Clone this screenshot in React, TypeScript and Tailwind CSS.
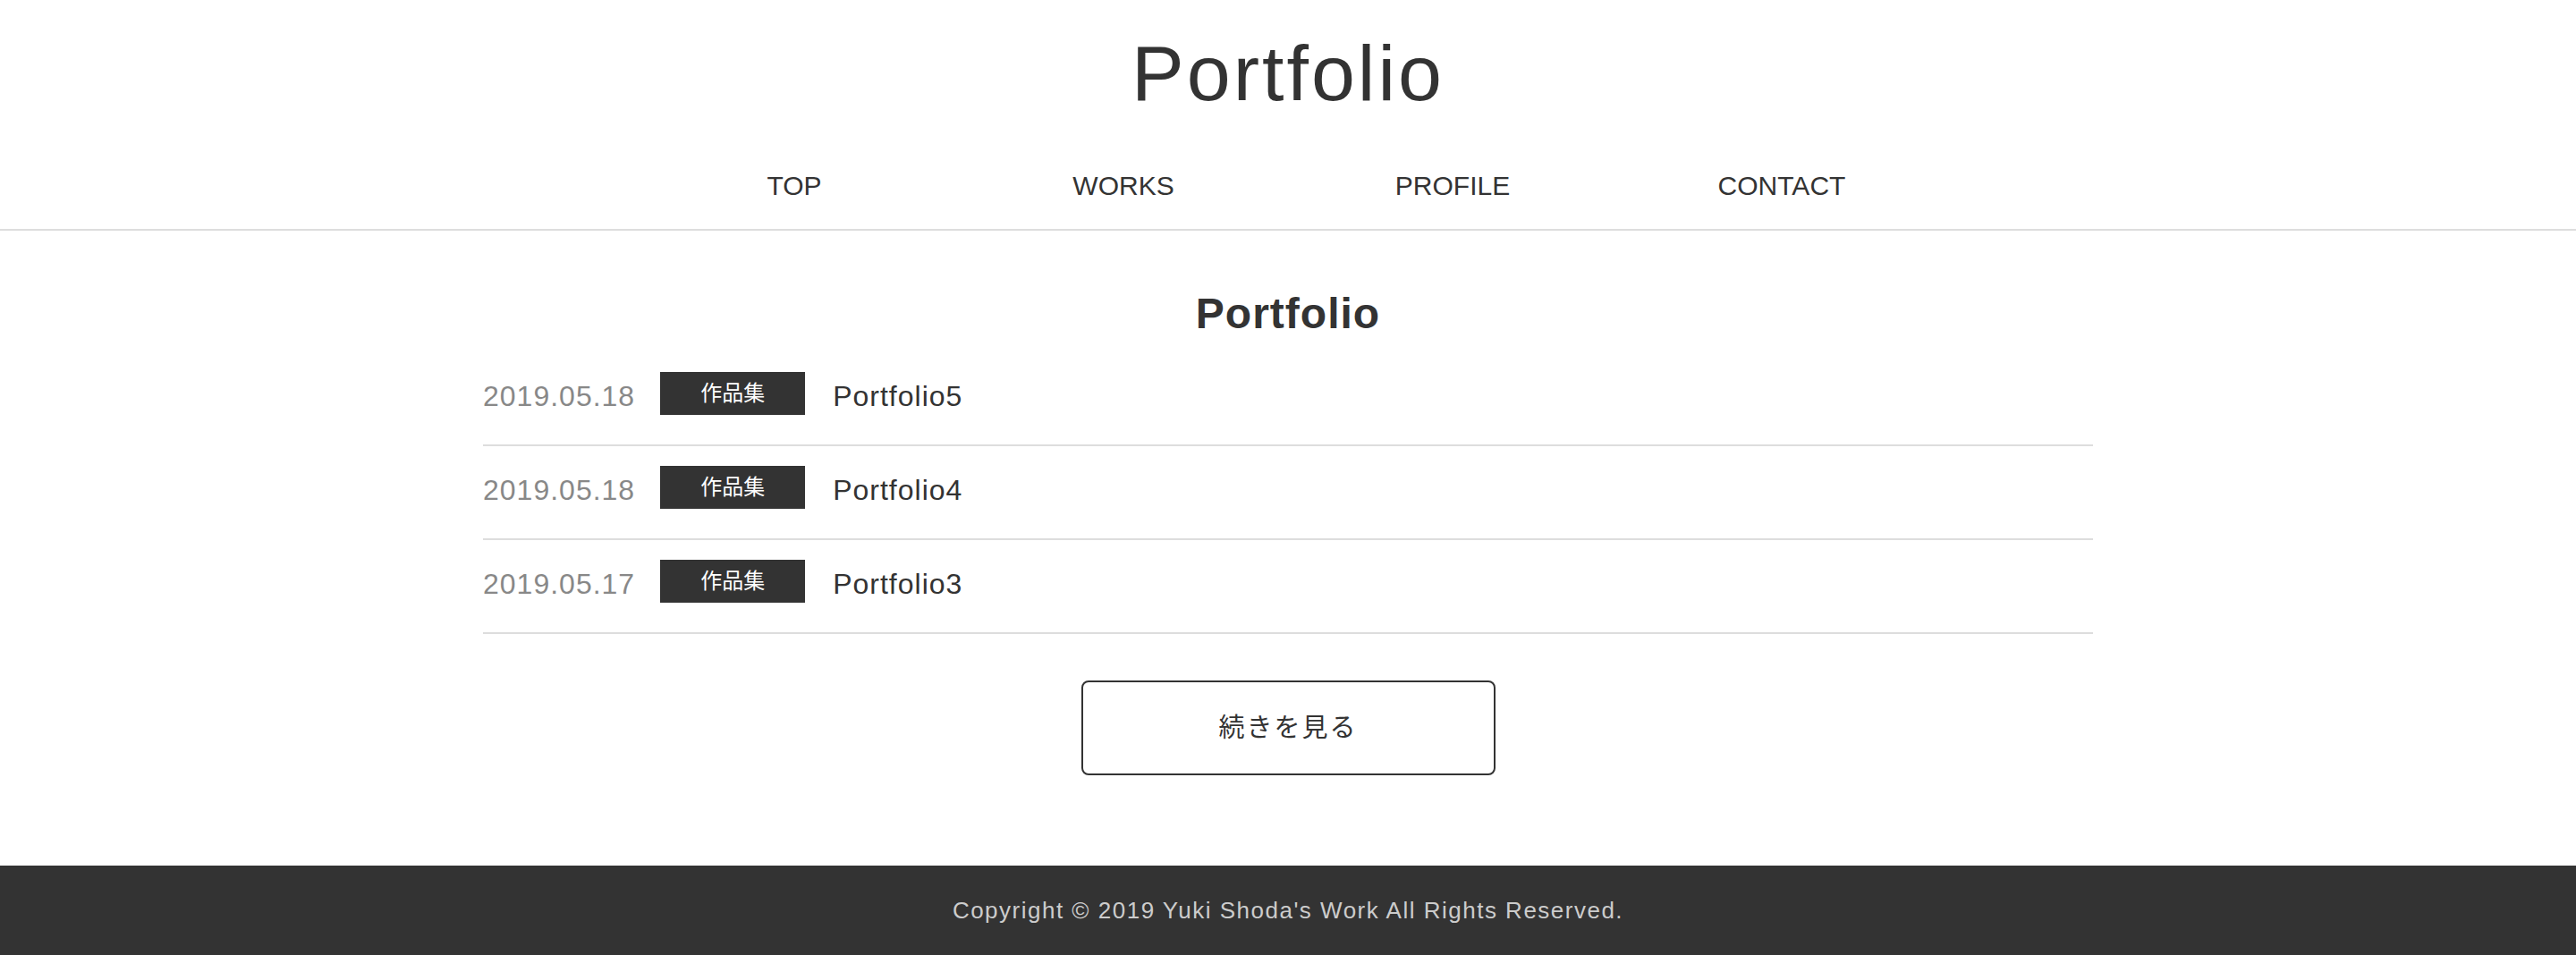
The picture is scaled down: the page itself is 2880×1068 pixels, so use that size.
const navItems = ['TOP', 'WORKS', 'PROFILE', 'CONTACT']

const posts = [
  { date: '2019.05.18', category: '作品集', title: 'Portfolio5' },
  { date: '2019.05.18', category: '作品集', title: 'Portfolio4' },
  { date: '2019.05.17', category: '作品集', title: 'Portfolio3' },
]

const fontStack = "font-['Liberation_Sans','Noto_Sans_CJK_JP',sans-serif]"

function Header() {
  return (
    <header className="border-b-2 border-[#dddddd] pb-[33px]">
      <h1 className="pt-[38px] text-center text-[88px] leading-none tracking-[3px] text-[#333333]">
        Portfolio
      </h1>
      <nav className="mx-auto mt-[67px] flex w-[1472px]">
        {navItems.map(item => (
          <a key={item} href="#" className="flex-1 text-center text-[30px] leading-none text-[#333333]">
            {item}
          </a>
        ))}
      </nav>
    </header>
  )
}

function PostRow({ date, category, title }: { date: string; category: string; title: string }) {
  return (
    <li className="flex items-center border-b-2 border-[#dddddd] pt-[22px] pb-[33px]">
      <span className="mt-[6px] text-[32px] leading-none tracking-[1px] text-[#888888]">{date}</span>
      <span className="ml-[28px] flex h-[48px] w-[162px] items-center justify-center bg-[#333333] text-[24px] leading-none text-white">
        {category}
      </span>
      <span className="mt-[6px] ml-[31px] text-[32px] leading-none tracking-[1px] text-[#333333]">{title}</span>
    </li>
  )
}

export default function App() {
  return (
    <div className={`min-h-screen bg-white ${fontStack}`}>
      <Header />

      <main className="mx-auto w-[1800px]">
        <h2 className="pt-[69px] text-center text-[48px] font-bold leading-none tracking-[1px] text-[#333333]">
          Portfolio
        </h2>
        <ul className="mt-[19px]">
          {posts.map((post, i) => (
            <PostRow key={i} {...post} />
          ))}
        </ul>
        <div className="mt-[52px] flex justify-center">
          <button className="h-[106px] w-[463px] rounded-[8px] border-2 border-[#333333] text-[29px] leading-none tracking-[2px] text-[#333333]">
            続きを見る
          </button>
        </div>
      </main>

      <footer className="mt-[101px] flex h-[100px] items-center justify-center bg-[#333333]">
        <p className="text-[26px] leading-none tracking-[1.5px] text-[#cccccc]">
          Copyright © 2019 Yuki Shoda's Work All Rights Reserved.
        </p>
      </footer>
    </div>
  )
}
